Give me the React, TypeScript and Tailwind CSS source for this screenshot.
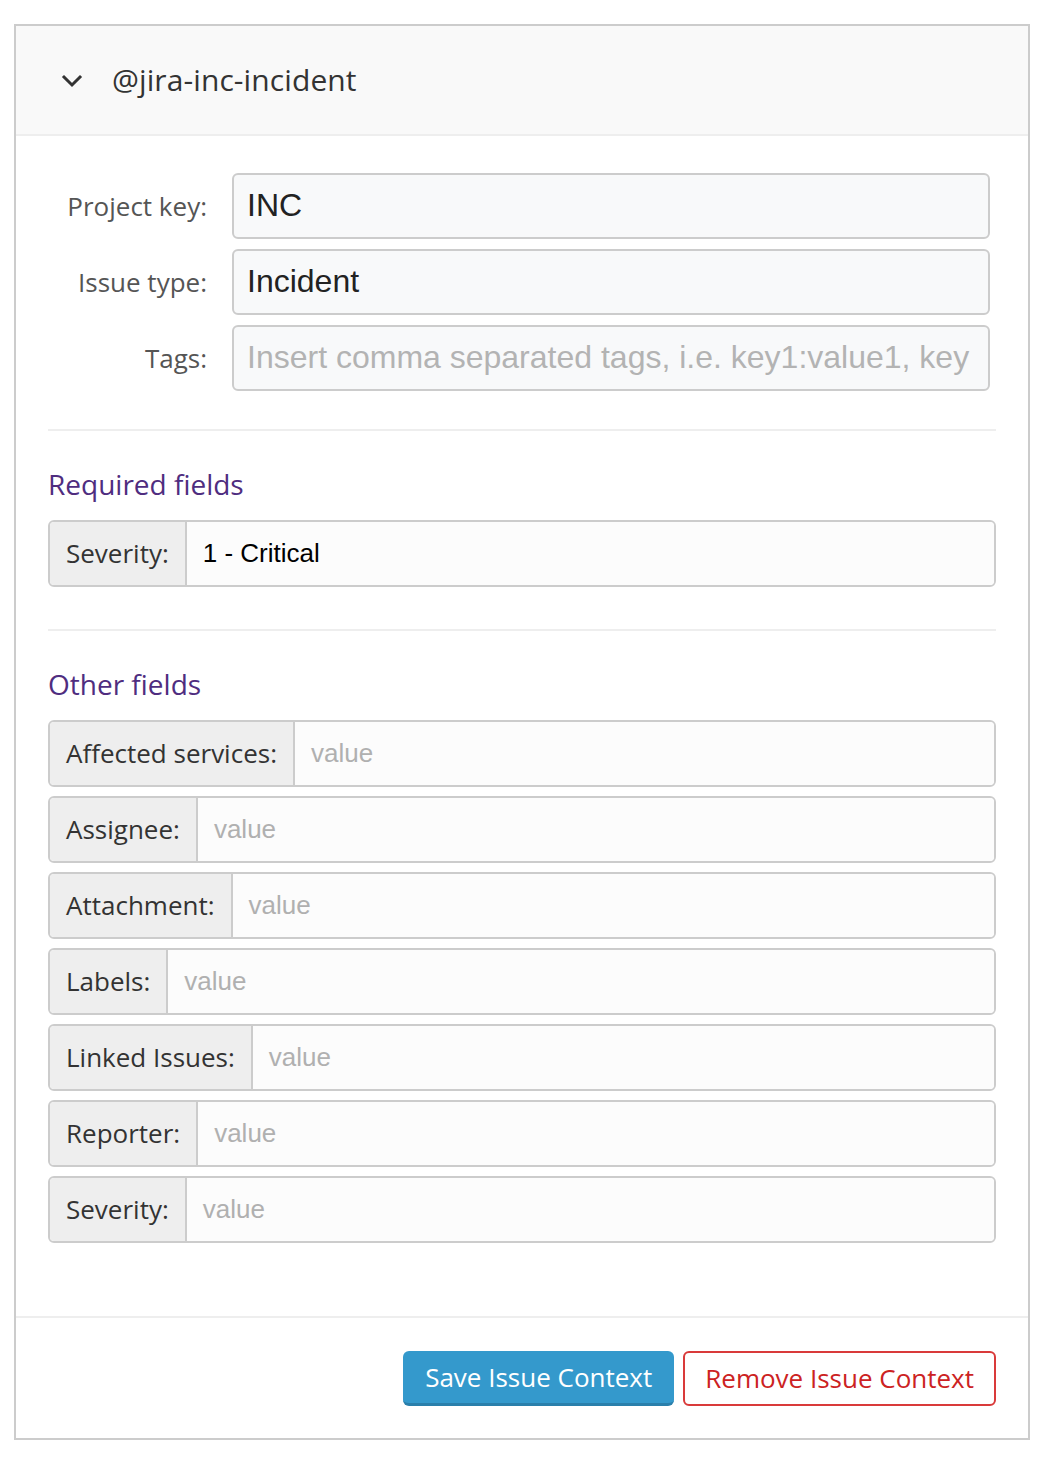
import React from 'react';

const otherFields = [
  'Affected services:',
  'Assignee:',
  'Attachment:',
  'Labels:',
  'Linked Issues:',
  'Reporter:',
  'Severity:',
];

const sans = { fontFamily: '"Open Sans", "Noto Sans", sans-serif' };

function TopField({ label, value, placeholder }: { label: string; value?: string; placeholder?: string }) {
  return (
    <div className="flex items-center gap-[25px]">
      <label className="w-[159px] text-right text-[26px] text-[#555]" style={sans}>{label}</label>
      <div className="flex-1 h-[66px] border-2 border-[#ccc] rounded-[6px] bg-[#f8f9fa] flex items-center pl-[13px] pr-[8px] pb-[3px] whitespace-nowrap font-['Liberation_Sans',Arial,sans-serif] text-[32px]">
        {value ? <span className="text-[#222]">{value}</span> : <span className="text-[#b3b3b3]">{placeholder}</span>}
      </div>
    </div>
  );
}

function AddonField({ label, value }: { label: string; value?: string }) {
  return (
    <div className="flex h-[67px] border-2 border-[#ccc] rounded-[6px] overflow-hidden">
      <div className="bg-[#eee] px-[16px] flex items-center text-[26px] text-[#333] border-r-2 border-[#ccc] whitespace-nowrap" style={sans}>
        {label}
      </div>
      <div className="flex-1 bg-[#fcfcfc] flex items-center px-[16px] font-['Liberation_Sans',Arial,sans-serif] text-[26px]">
        {value ? <span className="text-black">{value}</span> : <span className="text-[#b0b0b0]">value</span>}
      </div>
    </div>
  );
}

export default function App() {
  return (
    <div className="bg-white w-[1050px] h-[1458px] pt-[24px] pl-[14px]" style={sans}>
      <div className="w-[1016px] h-[1416px] border-2 border-[#ccc] flex flex-col">
        {/* Header */}
        <div className="h-[110px] shrink-0 bg-[#f9f9f9] border-b-2 border-[#eee] flex items-center pl-[45px] pt-[4px]">
          <svg width="22" height="16" viewBox="0 0 22 16" className="mt-[-2px]">
            <path d="M3 4 L11 12 L19 4" fill="none" stroke="#333" strokeWidth="3" strokeLinecap="square" />
          </svg>
          <span className="ml-[29px] text-[30px] text-[#333] leading-none pb-[4px] tracking-[0.1px]">@jira-inc-incident</span>
        </div>

        {/* Body */}
        <div className="px-[32px] pt-[37px] pb-[73px] border-b-2 border-[#eee]">
          <div className="flex flex-col gap-[10px] mr-[6px]">
            <TopField label="Project key:" value="INC" />
            <TopField label="Issue type:" value="Incident" />
            <TopField label="Tags:" placeholder="Insert comma separated tags, i.e. key1:value1, key" />
          </div>

          <div className="mt-[38px] h-[2px] bg-[#eee]" />

          <h3 className="mt-[33px] h-[40px] leading-[40px] text-[28px] text-[#4f2d7f] mb-[16px]">Required fields</h3>
          <AddonField label="Severity:" value="1 - Critical" />

          <div className="mt-[42px] h-[2px] bg-[#eee]" />

          <h3 className="mt-[33px] h-[40px] leading-[40px] text-[28px] text-[#4f2d7f] mb-[16px]">Other fields</h3>
          <div className="flex flex-col gap-[9px]">
            {otherFields.map(f => (
              <AddonField key={f} label={f} />
            ))}
          </div>
        </div>

        {/* Footer */}
        <div className="flex justify-end gap-[9px] px-[32px] pt-[33px]">
          <button className="h-[55px] px-[22px] rounded-[6px] bg-[#3499cc] border-b-[3px] border-[#2a7fab] text-white text-[26px]">
            Save Issue Context
          </button>
          <button className="h-[55px] px-[20px] rounded-[6px] bg-white border-2 border-[#d93a3a] text-[#cc2222] text-[26px]">
            Remove Issue Context
          </button>
        </div>
      </div>
    </div>
  );
}
